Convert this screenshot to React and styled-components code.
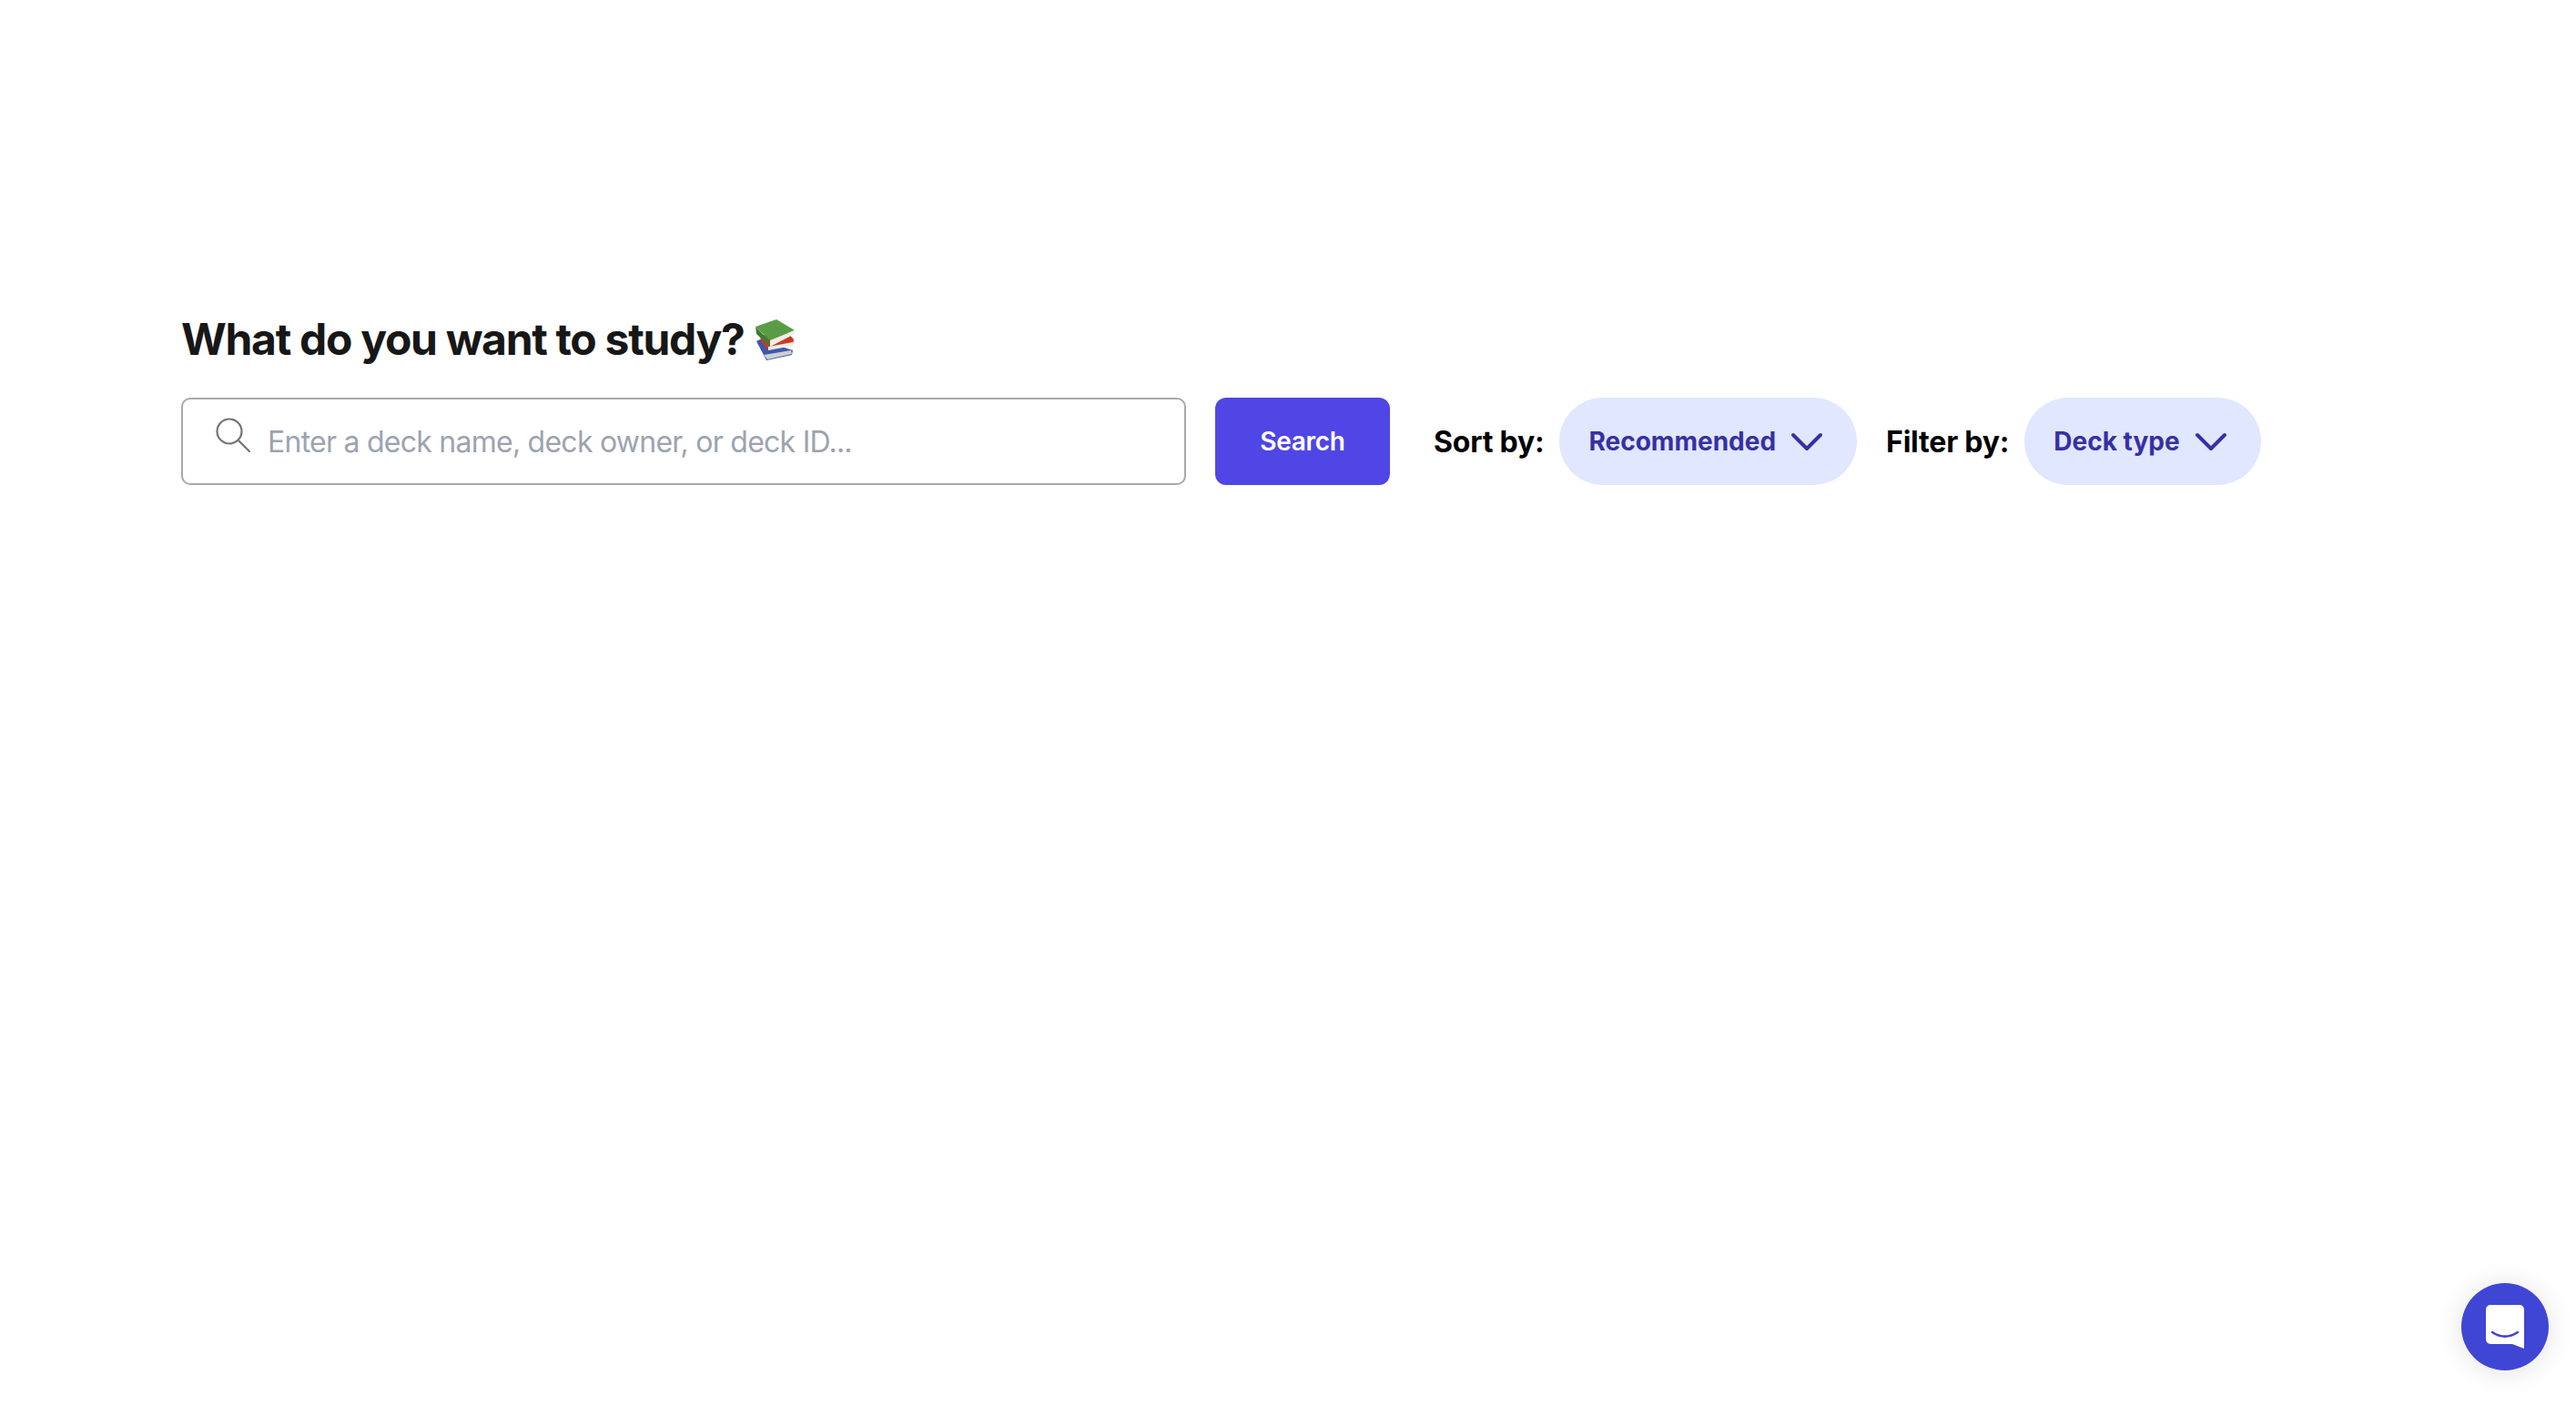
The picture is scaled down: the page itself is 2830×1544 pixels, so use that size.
import React from "react";
import styled, { createGlobalStyle } from "styled-components";

const GlobalStyle = createGlobalStyle`
  html, body {
    margin: 0;
    padding: 0;
    background: #fff;
    font-family: Inter, "Liberation Sans", sans-serif;
  }
`;

const Page = styled.div`
  min-height: 1544px;
  box-sizing: border-box;
  padding: 342px 0 0 199px;
`;
const Title = styled.h1`
  display: flex;
  align-items: center;
  gap: 10px;
  height: 62px;
  margin: 0 0 33px;
  font-size: 48px;
  line-height: 62px;
  font-weight: 700;
  letter-spacing: -1.3px;
  color: #171717;
`;
const Toolbar = styled.div`
  display: flex;
  align-items: center;
  height: 96px;
`;
const SearchBox = styled.label`
  display: flex;
  align-items: center;
  gap: 19px;
  box-sizing: border-box;
  width: 1104px;
  height: 96px;
  padding: 0 36px;
  border: 2px solid #a8a8a8;
  border-radius: 10px;
`;
const SearchInput = styled.input`
  flex: 1;
  border: 0;
  outline: 0;
  padding: 0;
  font-family: inherit;
  font-size: 32px;
  letter-spacing: -0.75px;
  color: #171717;
  &::placeholder {
    color: #9ca3af;
    opacity: 1;
  }
`;
const SearchButton = styled.button`
  width: 192px;
  height: 96px;
  margin: 0 48px 0 32px;
  border: 0;
  border-radius: 12px;
  background: #4f46e5;
  color: #fff;
  font-family: inherit;
  font-size: 28px;
  font-weight: 600;
  letter-spacing: -0.3px;
`;
const Label = styled.span`
  margin-right: 17px;
  font-size: 32px;
  font-weight: 700;
  letter-spacing: -0.2px;
  color: #000;
`;
const Pill = styled.button`
  display: flex;
  align-items: center;
  gap: 16px;
  height: 96px;
  margin-right: ${(props) => props.$gap || 0}px;
  padding: 0 37px 0 32px;
  border: 0;
  border-radius: 48px;
  background: #e0e7ff;
  color: #3730a3;
  font-family: inherit;
  font-size: 28px;
  font-weight: 700;
`;
const ChatButton = styled.button`
  position: absolute;
  left: 2704px;
  top: 1410px;
  display: flex;
  align-items: center;
  justify-content: center;
  width: 96px;
  height: 96px;
  padding: 0;
  border: 0;
  border-radius: 50%;
  background: #4046d4;
  box-shadow: 0 2px 30px rgba(0, 0, 0, 0.12);
`;

function SearchIcon() {
  return (
    <svg width="38" height="38" viewBox="0 0 38 38" fill="none" stroke="#737373" strokeWidth="2.2" style={{ flex: "none", marginTop: -14 }}>
      <circle cx="15" cy="15" r="13.5" />
      <path d="M25 25l12 12" strokeLinecap="round" />
    </svg>
  );
}

function Chevron() {
  return (
    <svg width="36" height="22" viewBox="0 0 36 22" fill="none" stroke="#3730a3" strokeWidth="4" strokeLinecap="round" strokeLinejoin="round">
      <path d="M3 4l15 15L33 4" />
    </svg>
  );
}

function BooksIcon() {
  return (
    <svg width="46" height="46" viewBox="0 0 46 46">
      <path d="M3 25l4-2 36 12-1 5-28 6z" fill="#3b58ad" />
      <path d="M11 40l30-5 1 4-27 6z" fill="#cfcfcf" />
      <path d="M7 19l28-6 9 10-1 6-27 6-8-10z" fill="#c93a25" />
      <path d="M16 31l27-5v4l-27 5z" fill="#ececec" />
      <path d="M2 9l23-8 20 12-27 11z" fill="#5a9c46" />
      <path d="M2 9l15 15 1 7-15-14z" fill="#3d7d34" />
      <path d="M18 24l27-11v4L18 31z" fill="#f0f0e6" />
    </svg>
  );
}

function ChatIcon() {
  return (
    <svg width="42" height="48" viewBox="0 0 42 48">
      <path d="M5 0h32a5 5 0 0 1 5 5v43l-13-5H5a5 5 0 0 1-5-5V5a5 5 0 0 1 5-5z" fill="#fff" />
      <path d="M7 30c9 6 19 6 28 0" fill="none" stroke="#4046d4" strokeWidth="2.6" strokeLinecap="round" />
    </svg>
  );
}

export default function App() {
  return (
    <Page>
      <GlobalStyle />
      <Title>
        What do you want to study? <BooksIcon />
      </Title>
      <Toolbar>
        <SearchBox>
          <SearchIcon />
          <SearchInput placeholder="Enter a deck name, deck owner, or deck ID..." />
        </SearchBox>
        <SearchButton>Search</SearchButton>
        <Label>Sort by:</Label>
        <Pill $gap={32}>
          Recommended <Chevron />
        </Pill>
        <Label>Filter by:</Label>
        <Pill>
          Deck type <Chevron />
        </Pill>
      </Toolbar>
      <ChatButton>
        <ChatIcon />
      </ChatButton>
    </Page>
  );
}
